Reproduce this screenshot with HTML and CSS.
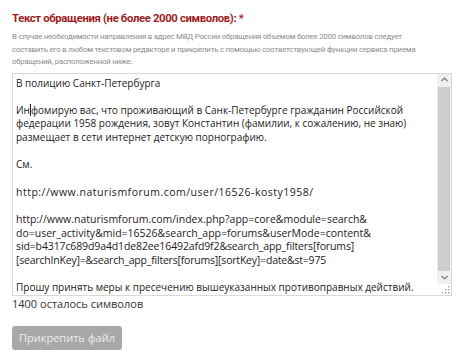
FILE: index.html
```html
<!DOCTYPE html>
<html lang="ru">
<head>
<meta charset="utf-8">
<link rel="stylesheet" href="styles.css">
</head>
<body>
<div class="form">
  <h2 class="title">Текст обращения (не более 2000 символов): <span class="req">*</span></h2>
  <p class="hint">В случае необходимости направления в адрес МВД России обращения объемом более 2000 символов следует<br>составить его в любом текстовом редакторе и прикрепить с помощью соответствующей функции сервиса приема<br>обращений, расположенной ниже.</p>
  <div class="area">
    <div class="area-text">
      <div class="ln">В полицию Санкт-Петербурга</div>
      <div class="ln">&nbsp;</div>
      <div class="ln">Ин<span class="caret"></span>фомирую вас, что проживающий в Санк-Петербурге гражданин Российской</div>
      <div class="ln">федерации 1958 рождения, зовут Константин (фамилии, к сожалению, не знаю)</div>
      <div class="ln">размещает в сети интернет детскую порнографию.</div>
      <div class="ln">&nbsp;</div>
      <div class="ln">См.</div>
      <div class="ln">&nbsp;</div>
      <div class="ln url url-wide">http://www.naturismforum.com/user/16526-kosty1958/</div>
      <div class="ln">&nbsp;</div>
      <div class="ln url">http://www.naturismforum.com/index.php?app=core&amp;module=search&amp;</div>
      <div class="ln url">do=user_activity&amp;mid=16526&amp;search_app=forums&amp;userMode=content&amp;</div>
      <div class="ln url url-tight">sid=b4317c689d9a4d1de82ee16492afd9f2&amp;search_app_filters[forums]</div>
      <div class="ln url url-tighter">[searchInKey]=&amp;search_app_filters[forums][sortKey]=date&amp;st=975</div>
      <div class="ln">&nbsp;</div>
      <div class="ln">Прошу принять меры к пресечению вышеуказанных противоправных действий.</div>
    </div>
    <div class="scroll">
      <div class="arrow">
        <svg width="7" height="5" viewBox="0 0 7 5"><path d="M0.5 4 L3.5 1 L6.5 4" fill="none" stroke="#7a7a7a" stroke-width="1.2"/></svg>
      </div>
      <div class="track"><div class="thumb"></div></div>
      <div class="arrow">
        <svg width="7" height="5" viewBox="0 0 7 5"><path d="M0.5 1 L3.5 4 L6.5 1" fill="none" stroke="#7a7a7a" stroke-width="1.2"/></svg>
      </div>
      <div class="grip">
        <svg width="8" height="8" viewBox="0 0 8 8"><g fill="#a0a0a0"><rect x="6" y="0" width="1.4" height="1.4"/><rect x="3" y="3" width="1.4" height="1.4"/><rect x="6" y="3" width="1.4" height="1.4"/><rect x="0" y="6" width="1.4" height="1.4"/><rect x="3" y="6" width="1.4" height="1.4"/><rect x="6" y="6" width="1.4" height="1.4"/></g></svg>
      </div>
    </div>
  </div>
  <div class="counter">1400 осталось символов</div>
  <button class="btn" type="button">Прикрепить файл</button>
</div>
</body>
</html>
```

FILE: styles.css
```css
html, body {
  margin: 0;
  padding: 0;
  background: #ffffff;
}

.form {
  padding: 10px 16px 0 12px;
  font-family: "Open Sans", "Noto Sans", sans-serif;
}

.title {
  margin: 0;
  font-family: Roboto, "Noto Sans", sans-serif;
  font-size: 11.3px;
  line-height: 18px;
  font-weight: 700;
  color: #9e1c22;
  letter-spacing: -0.35px;
}

.req {
  color: #9e1c22;
}

.hint {
  margin: 3px 0 0 0;
  font-family: Roboto, "Noto Sans", sans-serif;
  font-size: 7.8px;
  line-height: 12.5px;
  color: #8c8c8c;
  letter-spacing: -0.2px;
  white-space: nowrap;
}

.area {
  margin-top: 4px;
  width: 438px;
  height: 221px;
  border: 1px solid #d9d9d9;
  display: flex;
  background: #fff;
}

.area-text {
  flex: 1;
  padding: 3px 0 0 3px;
  font-family: "Open Sans", sans-serif;
  font-size: 10px;
  line-height: 13.65px;
  color: #1c1c1c;
  white-space: nowrap;
  overflow: hidden;
}

.url {
  font-size: 10.5px;
}

.url-wide {
  letter-spacing: 0.5px;
}

.url-tight {
  letter-spacing: -0.12px;
}

.url-tighter {
  letter-spacing: -0.2px;
}

.caret {
  display: inline-block;
  width: 1px;
  height: 12px;
  background: #222;
  vertical-align: -2px;
}

.scroll {
  width: 14px;
  display: flex;
  flex-direction: column;
  background: #f0f0f0;
}

.arrow {
  height: 12px;
  display: flex;
  align-items: center;
  justify-content: center;
}

.track {
  flex: 1;
  display: flex;
  padding: 1px 1px;
}

.thumb {
  flex: 1;
  background: #cdcdcd;
}

.grip {
  height: 10px;
  background: #fff;
  display: flex;
  align-items: flex-end;
  justify-content: flex-end;
  padding: 0 1px 1px 0;
}

.counter {
  margin-top: 1px;
  font-size: 11px;
  line-height: 14px;
  color: #333;
}

.btn {
  margin-top: 15px;
  width: 110px;
  height: 24px;
  border: none;
  border-radius: 3px;
  background: #a8a8a8;
  color: #ececec;
  font-family: "Open Sans", sans-serif;
  font-size: 11px;
  padding: 0;
}
```
